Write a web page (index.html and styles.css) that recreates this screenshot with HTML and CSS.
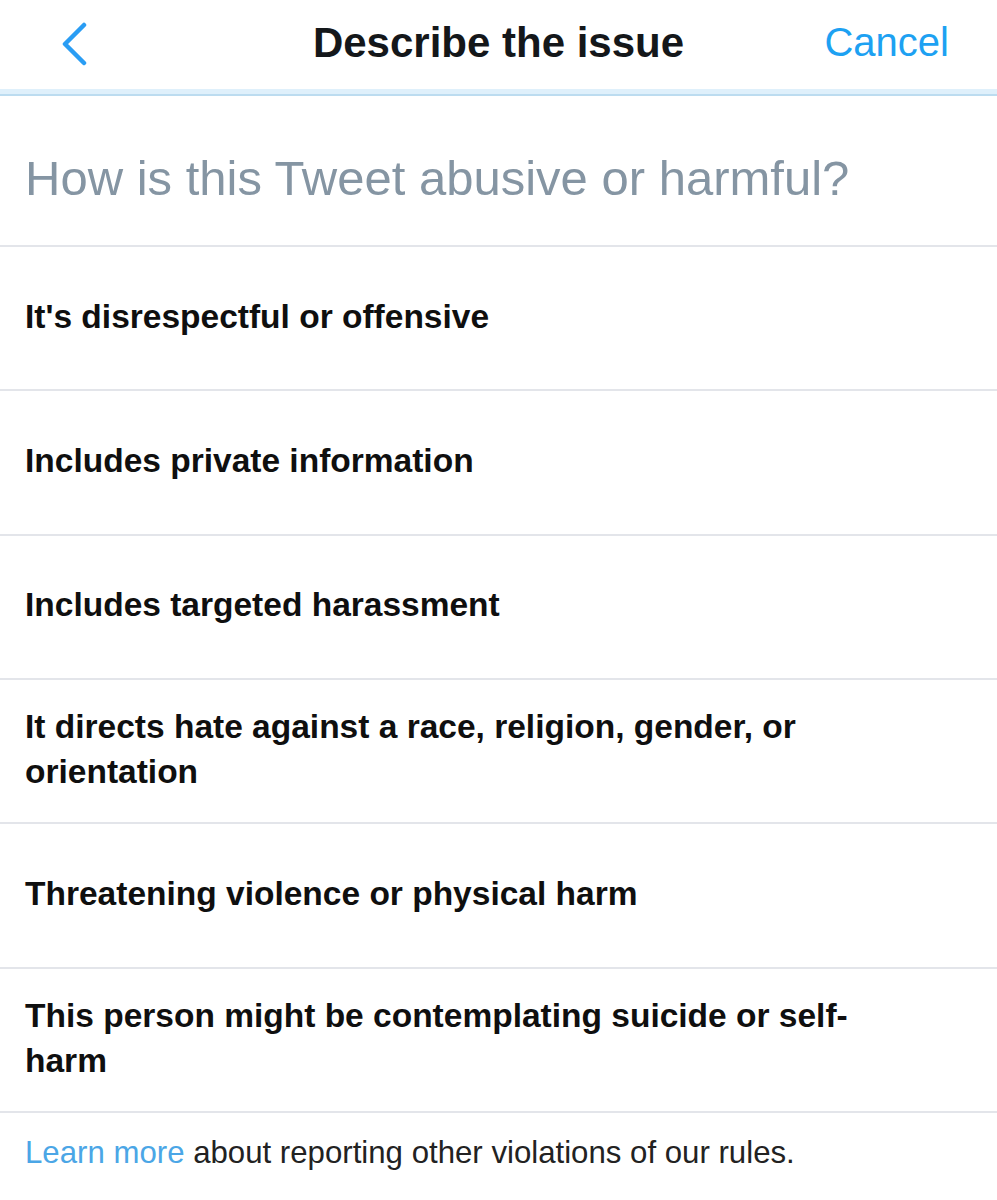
FILE: index.html
```html
<!DOCTYPE html>
<html>
<head>
<meta charset="utf-8">
<link rel="stylesheet" href="styles.css">
</head>
<body>
<div class="page">
  <header class="nav">
    <div class="nav-left">
      <svg class="back" width="30" height="44" viewBox="0 0 30 44"><path d="M24 3 L5 22 L24 41" fill="none" stroke="#2a9df4" stroke-width="4.5" stroke-linecap="round" stroke-linejoin="round"/></svg>
    </div>
    <div class="title">Describe the issue</div>
    <div class="nav-right">Cancel</div>
  </header>
  <div class="band"></div>
  <div class="question">How is this Tweet abusive or harmful?</div>
  <ul class="options">
    <li class="option">It's disrespectful or offensive</li>
    <li class="option">Includes private information</li>
    <li class="option">Includes targeted harassment</li>
    <li class="option">It directs hate against a race, religion, gender, or orientation</li>
    <li class="option">Threatening violence or physical harm</li>
    <li class="option">This person might be contemplating suicide or self-harm</li>
  </ul>
  <p class="footer"><span class="link">Learn more</span> about reporting other violations of our rules.</p>
</div>
</body>
</html>
```

FILE: styles.css
```css
* { box-sizing: border-box; }
html, body { margin: 0; padding: 0; background: #fff; }
body { font-family: "Liberation Sans", Arial, sans-serif; }
.page { width: 997px; }
.nav {
  height: 89px;
  display: grid;
  grid-template-columns: 1fr auto 1fr;
  align-items: center;
}
.nav-left { padding-left: 60px; display: flex; align-items: center; padding-bottom: 2px; }
.title {
  font-weight: bold;
  font-size: 42px;
  color: #14171a;
  padding-bottom: 4px;
}
.nav-right {
  text-align: right;
  padding-right: 48px;
  font-size: 40px;
  color: #1da1f2;
  padding-bottom: 4px;
}
.band {
  height: 7px;
  background: #dff0fb;
  border-bottom: 2px solid #bcdcf0;
}
.question {
  height: 149px;
  padding-left: 25px;
  display: flex;
  align-items: center;
  font-size: 49px;
  color: #8595a3;
  padding-top: 14px;
}
.options { list-style: none; margin: 0; padding: 0; }
.option {
  border-top: 2px solid #e3e5ea;
  height: 144.33px;
  display: flex;
  align-items: center;
  padding: 0 140px 4px 25px;
  font-weight: bold;
  font-size: 33.5px;
  line-height: 45px;
  color: #0f0f0f;
}
.footer {
  margin: 0;
  border-top: 2px solid #e3e5ea;
  padding: 22px 25px;
  font-size: 31.2px;
  color: #222;
}
.link { color: #4ba6e6; }
```
